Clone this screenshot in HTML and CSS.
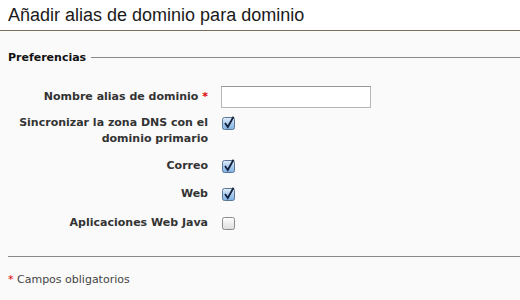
FILE: index.html
```html
<!DOCTYPE html>
<html lang="es">
<head>
  <meta charset="UTF-8">
  <title>Añadir alias de dominio</title>
  <link rel="stylesheet" href="styles.css">
</head>
<body>
  <div class="page-header">
    <h1>Añadir alias de dominio para dominio</h1>
  </div>

  <div class="content">
    <fieldset class="prefs">
      <legend>Preferencias</legend>

      <div class="row row-first">
        <label class="row-label" for="aliasName">Nombre alias de dominio <span class="required">*</span></label>
        <div class="row-field"><input type="text" id="aliasName" class="text-input"></div>
      </div>

      <div class="row">
        <label class="row-label">Sincronizar la zona DNS con el dominio primario</label>
        <div class="row-field">
          <svg class="check" width="14" height="14" viewBox="0 0 14 14">
            <defs>
              <linearGradient id="blue" x1="0" y1="0" x2="0" y2="1">
                <stop offset="0" stop-color="#e4effa"/>
                <stop offset="0.5" stop-color="#a9cbee"/>
                <stop offset="1" stop-color="#7eb0e4"/>
              </linearGradient>
            </defs>
            <rect x="0.5" y="1.5" width="12" height="12" rx="2" fill="url(#blue)" stroke="#5c7896"/>
            <path d="M3 7 L5.8 11 L11.5 0.8" fill="none" stroke="#14213a" stroke-width="1.8"/>
          </svg>
        </div>
      </div>

      <div class="row row-tight">
        <label class="row-label">Correo</label>
        <div class="row-field">
          <svg class="check" width="14" height="14" viewBox="0 0 14 14">
            <rect x="0.5" y="1.5" width="12" height="12" rx="2" fill="url(#blue)" stroke="#5c7896"/>
            <path d="M3 7 L5.8 11 L11.5 0.8" fill="none" stroke="#14213a" stroke-width="1.8"/>
          </svg>
        </div>
      </div>

      <div class="row">
        <label class="row-label">Web</label>
        <div class="row-field">
          <svg class="check" width="14" height="14" viewBox="0 0 14 14">
            <rect x="0.5" y="1.5" width="12" height="12" rx="2" fill="url(#blue)" stroke="#5c7896"/>
            <path d="M3 7 L5.8 11 L11.5 0.8" fill="none" stroke="#14213a" stroke-width="1.8"/>
          </svg>
        </div>
      </div>

      <div class="row row-last">
        <label class="row-label">Aplicaciones Web Java</label>
        <div class="row-field">
          <svg class="check" width="14" height="14" viewBox="0 0 14 14">
            <defs>
              <linearGradient id="grey" x1="0" y1="0" x2="0" y2="1">
                <stop offset="0" stop-color="#ffffff"/>
                <stop offset="1" stop-color="#dcdcdc"/>
              </linearGradient>
            </defs>
            <rect x="0.5" y="1.5" width="12" height="12" rx="2" fill="url(#grey)" stroke="#8a8a8a"/>
          </svg>
        </div>
      </div>
    </fieldset>

    <p class="note"><span class="required">*</span> Campos obligatorios</p>
  </div>
</body>
</html>
```

FILE: styles.css
```css
body {
  margin: 0;
  background: #fafafa;
  font-family: 'DejaVu Sans', Verdana, sans-serif;
  font-size: 11px;
  color: #333;
}
.page-header {
  background: #fff;
  border-bottom: 1px solid #7d6c5b;
  height: 30px;
  padding: 0 8px;
}
.page-header h1 {
  margin: 0;
  font-family: 'Liberation Sans', Arial, sans-serif;
  font-size: 18px;
  font-weight: normal;
  line-height: 30px;
  color: #1a1a1a;
}
.content {
  padding: 20px 0 0 8px;
}
.prefs {
  margin: 0;
  padding: 22px 0 25px 0;
  border: none;
  border-top: 1px solid #888;
  border-bottom: 1px solid #888;
}
.prefs legend {
  padding: 0 5px 0 0;
  font-weight: bold;
  color: #111;
}
.row {
  display: grid;
  grid-template-columns: 200px 1fr;
  column-gap: 13px;
  align-items: start;
  margin-top: 12px;
}
.row-first {
  margin-top: 0;
  align-items: center;
  margin-bottom: -5px;
}
.row-tight {
  margin-top: 11px;
}
.row-last {
  margin-top: 13px;
}
.row-label {
  text-align: right;
  font-weight: bold;
  line-height: 16px;
  color: #333;
}
.required {
  color: #d00;
}
.text-input {
  width: 150px;
  height: 22px;
  box-sizing: border-box;
  margin: 0;
  border: 1px solid #b5b5b5;
  border-top-color: #999;
  background: #fff;
}
.check {
  display: block;
  margin: 1px 0 0 1px;
}
.note {
  margin: 15px 0 0;
  line-height: 16px;
  color: #444;
}
```
